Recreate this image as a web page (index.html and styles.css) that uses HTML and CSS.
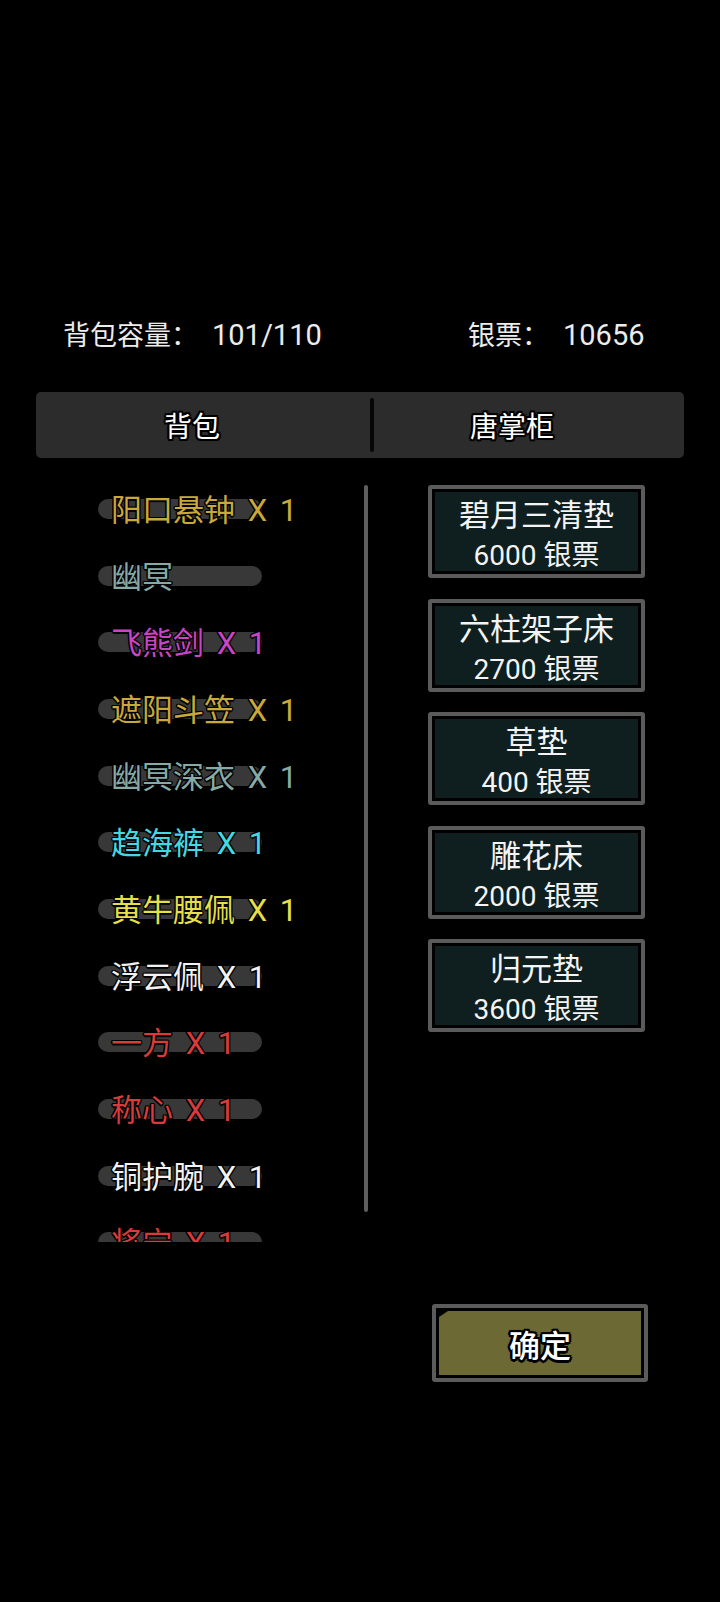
FILE: index.html
```html
<!DOCTYPE html>
<html lang="zh-CN">
<head>
<meta charset="utf-8">
<title>唐掌柜</title>
<link rel="stylesheet" href="styles.css">
</head>
<body>
<div class="screen">
  <div class="stats">
    <div class="stat stat-cap">背包容量：<span class="num">101/110</span></div>
    <div class="stat stat-money">银票：<span class="num">10656</span></div>
  </div>

  <div class="tabs">
    <div class="tab tab-left"><span class="tab-label">背包</span></div>
    <div class="tab-divider"></div>
    <div class="tab tab-right"><span class="tab-label">唐掌柜</span></div>
  </div>

  <div class="main">
    <div class="bag-list">
      <div class="item c-gold">阳口悬钟 X 1</div>
      <div class="item c-teal">幽冥</div>
      <div class="item c-purple">飞熊剑 X 1</div>
      <div class="item c-gold">遮阳斗笠 X 1</div>
      <div class="item c-teal">幽冥深衣 X 1</div>
      <div class="item c-cyan">趋海裤 X 1</div>
      <div class="item c-yellow">黄牛腰佩 X 1</div>
      <div class="item c-white">浮云佩 X 1</div>
      <div class="item c-red">一方 X 1</div>
      <div class="item c-red">称心 X 1</div>
      <div class="item c-white">铜护腕 X 1</div>
      <div class="item c-red">将宁 X 1</div>
    </div>
    <div class="scrollbar"></div>
    <div class="shop">
      <div class="card"><div class="card-title">碧月三清垫</div><div class="card-price">6000 银票</div></div>
      <div class="card"><div class="card-title">六柱架子床</div><div class="card-price">2700 银票</div></div>
      <div class="card"><div class="card-title">草垫</div><div class="card-price">400 银票</div></div>
      <div class="card"><div class="card-title">雕花床</div><div class="card-price">2000 银票</div></div>
      <div class="card"><div class="card-title">归元垫</div><div class="card-price">3600 银票</div></div>
    </div>
  </div>

  <div class="confirm-row">
    <div class="confirm">
      <div class="confirm-fill"><span class="confirm-label">确定</span></div>
    </div>
  </div>
</div>
</body>
</html>
```

FILE: styles.css
```css
html, body {
  margin: 0;
  padding: 0;
  background: #000;
}

body {
  width: 720px;
  height: 1602px;
  overflow: hidden;
  font-family: Roboto, "Noto Sans CJK SC", sans-serif;
  color: #f0f0f0;
}

.screen {
  display: flex;
  flex-direction: column;
}

/* header stats */
.stats {
  display: grid;
  grid-template-columns: 405px 1fr;
  padding: 315px 0 0 63px;
  height: 40px;
  line-height: 40px;
  font-size: 27px;
  color: #ececec;
}

.stat .num {
  font-size: 29px;
  margin-left: 14px;
}

/* tab bar */
.tabs {
  display: flex;
  margin: 37px 0 0 36px;
  width: 648px;
  height: 66px;
  background: #2c2c2c;
  border-radius: 5px;
  align-items: center;
}

.tab {
  display: flex;
  justify-content: center;
  align-items: center;
  height: 100%;
  box-sizing: border-box;
}

.tab-left { flex: 0 0 334px; padding-right: 22px; }
.tab-right { flex: 1; padding-right: 34px; }

.tab-label {
  font-size: 28px;
  font-weight: 400;
  color: #fff;
  text-shadow:
    2.2px 0 0 #000, -2.2px 0 0 #000, 0 2.2px 0 #000, 0 -2.2px 0 #000,
    1.6px 1.6px 0 #000, -1.6px 1.6px 0 #000, 1.6px -1.6px 0 #000, -1.6px -1.6px 0 #000,
    0 0 3px #000;
}

.tab-divider {
  width: 4px;
  height: 54px;
  background: #060606;
  border-radius: 2px;
}

/* main area */
.main {
  display: flex;
  margin-top: 17px;
  padding-left: 98px;
  align-items: flex-start;
}

.bag-list {
  width: 266px;
  height: 767px;
  overflow: hidden;
  display: flex;
  flex-direction: column;
}

.item {
  position: relative;
  box-sizing: border-box;
  flex: 0 0 66.67px;
  height: 66.67px;
  padding: 3px 0 0 13px;
  line-height: 66.67px;
  font-size: 31px;
  word-spacing: 5px;
  white-space: nowrap;
  z-index: 0;
  text-shadow:
    1.5px 0 0 rgba(0,0,0,.85), -1.5px 0 0 rgba(0,0,0,.85),
    0 1.5px 0 rgba(0,0,0,.85), 0 -1.5px 0 rgba(0,0,0,.85),
    1px 1px 0 rgba(0,0,0,.85), -1px 1px 0 rgba(0,0,0,.85),
    1px -1px 0 rgba(0,0,0,.85), -1px -1px 0 rgba(0,0,0,.85);
}

.item::before {
  content: "";
  position: absolute;
  left: 0;
  top: 24px;
  width: 164px;
  height: 20px;
  border-radius: 10px;
  background: #383838;
  z-index: -1;
}

.c-gold   { color: #c9a83c; }
.c-teal   { color: #86aba7; }
.c-purple { color: #c944c9; }
.c-cyan   { color: #45d8e0; }
.c-yellow { color: #e5df4a; }
.c-white  { color: #f2f2f2; }
.c-red    { color: #d83b3b; }

.scrollbar {
  width: 4px;
  height: 727px;
  margin-top: 10px;
  background: #5e5e5e;
  border-radius: 2px;
}

/* shop cards */
.shop {
  display: flex;
  flex-direction: column;
  gap: 20.5px;
  margin: 10px 0 0 60px;
}

.card {
  box-sizing: border-box;
  width: 217px;
  height: 93px;
  border: 4px solid #5b5b5b;
  border-radius: 3px;
  background: #0f1e1e;
  box-shadow: inset 0 0 0 3px #000;
  display: flex;
  flex-direction: column;
  align-items: center;
  padding-top: 7px;
  color: #f4f4f4;
}

.card-title {
  font-size: 31px;
  line-height: 40px;
}

.card-price {
  font-size: 28px;
  line-height: 40px;
}

/* confirm button */
.confirm-row {
  display: flex;
  padding-left: 432px;
  margin-top: 62px;
}

.confirm {
  box-sizing: border-box;
  width: 216px;
  height: 78px;
  border: 4px solid #5b5b5b;
  border-radius: 3px;
  background: #000;
  padding: 3px;
  display: flex;
}

.confirm-fill {
  flex: 1;
  background: #6c6935;
  clip-path: polygon(9px 0, 100% 0, 100% 100%, 0 100%, 0 6px);
  display: flex;
  align-items: center;
  justify-content: center;
}

.confirm-label {
  font-size: 31px;
  font-weight: 500;
  color: #fff;
  text-shadow:
    2.5px 0 0 #000, -2.5px 0 0 #000, 0 2.5px 0 #000, 0 -2.5px 0 #000,
    1.8px 1.8px 0 #000, -1.8px 1.8px 0 #000, 1.8px -1.8px 0 #000, -1.8px -1.8px 0 #000,
    0 0 3px #000;
}
```
